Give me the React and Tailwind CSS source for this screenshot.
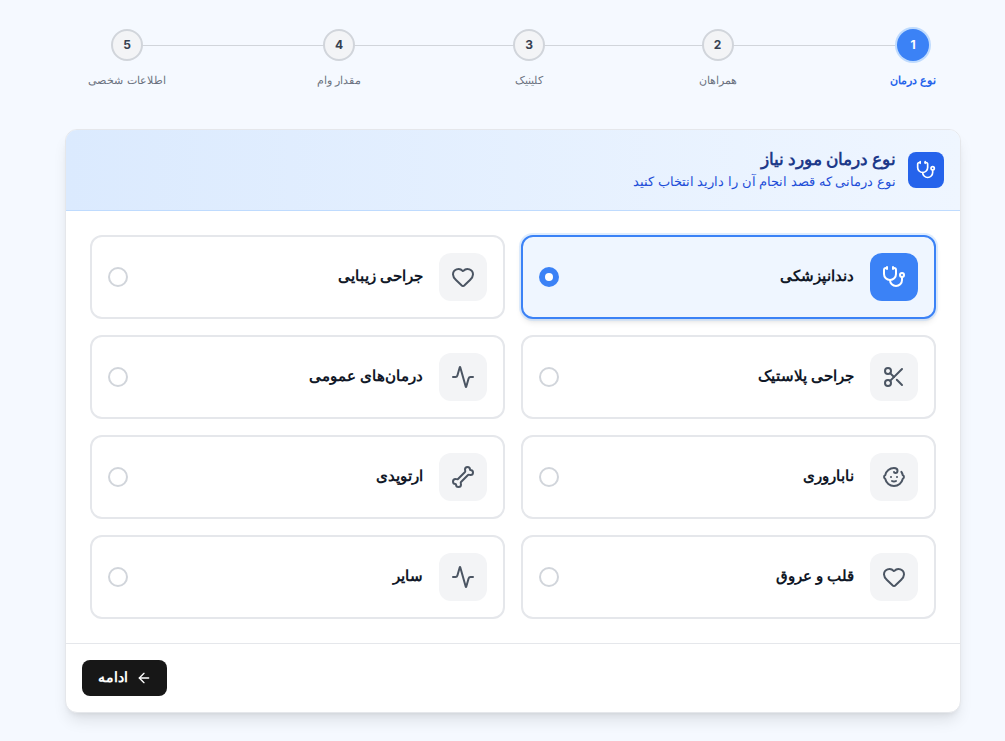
import React from "react";
import { Stethoscope, Heart, Scissors, Activity, Baby, Bone, ArrowLeft } from "lucide-react";

const steps = [
  ["1", "نوع درمان", "w-[47px]", true],
  ["2", "همراهان", "w-[41px]"],
  ["3", "کلینیک", "w-[33px]"],
  ["4", "مقدار وام", "w-[44px]"],
  ["5", "اطلاعات شخصی", "w-[77px]"],
];

const options = [
  ["دندانپزشکی", Stethoscope, true],
  ["جراحی زیبایی", Heart],
  ["جراحی پلاستیک", Scissors],
  ["درمان‌های عمومی", Activity],
  ["ناباروری", Baby],
  ["ارتوپدی", Bone],
  ["قلب و عروق", Heart],
  ["سایر", Activity],
];

function Step({ n, label, width, active }) {
  return (
    <div className={`relative flex flex-col items-center gap-[11px] ${width}`}>
      <div
        className={
          active
            ? "w-8 h-8 rounded-full bg-[#3b82f6] text-white ring-2 ring-[#bfdbfe] flex items-center justify-center text-xs font-bold"
            : "w-8 h-8 rounded-full bg-[#f3f4f6] border-2 border-[#d1d5db] text-[#374151] flex items-center justify-center text-xs font-bold"
        }
      >
        {n}
      </div>
      <span className={active ? "text-[11px] leading-4 font-bold text-[#2563eb] whitespace-nowrap" : "text-[11px] leading-4 text-[#6b7280] whitespace-nowrap"}>
        {label}
      </span>
    </div>
  );
}

function Option({ label, Icon, active }) {
  return (
    <div
      className={
        active
          ? "h-[84px] rounded-xl border-2 border-[#3b82f6] bg-[#eff6ff] shadow-md ring-2 ring-[#bfdbfe]/50 p-4 flex items-center gap-4"
          : "h-[84px] rounded-xl border-2 border-[#e5e7eb] bg-white p-4 flex items-center gap-4"
      }
    >
      <div
        className={
          active
            ? "w-12 h-12 rounded-xl bg-[#3b82f6] text-white flex items-center justify-center shrink-0"
            : "w-12 h-12 rounded-xl bg-[#f3f4f6] text-[#4b5563] flex items-center justify-center shrink-0"
        }
      >
        <Icon size={24} strokeWidth={2} />
      </div>
      <span className="flex-1 pb-0.5 text-[15px] font-semibold text-[#111827]">{label}</span>
      {active ? (
        <div className="w-5 h-5 rounded-full bg-[#3b82f6] flex items-center justify-center shrink-0">
          <div className="w-2 h-2 rounded-full bg-white" />
        </div>
      ) : (
        <div className="w-5 h-5 rounded-full border-2 border-[#d1d5db] shrink-0" />
      )}
    </div>
  );
}

export default function App() {
  return (
    <div dir="rtl" className="min-h-[741px] bg-[#f5f9ff] pt-[29px] pr-[44px] font-['Inter','Noto_Sans',sans-serif]">
      <div className="w-[896px]">
        <div className="relative flex items-start justify-between pr-[24.5px] pl-[23.5px] mb-[41px]">
          <div className="absolute top-4 right-[48px] left-[62px] h-px bg-[#d1d5db]" />
          {steps.map(([n, label, width, active]) => (
            <Step key={n} n={n} label={label} width={width} active={active} />
          ))}
        </div>
        <div className="rounded-xl border border-[#e5e7eb] bg-white shadow-lg overflow-hidden">
          <div className="h-[81px] px-4 flex items-center gap-3 border-b border-[#bfdbfe] bg-gradient-to-l from-[#eff6ff] to-[#dbeafe]">
            <div className="w-9 h-9 rounded-lg bg-[#2563eb] text-white flex items-center justify-center shrink-0">
              <Stethoscope size={20} />
            </div>
            <div>
              <h2 className="text-[17px] font-bold leading-[22px] text-[#1e3a8a]">نوع درمان مورد نیاز</h2>
              <p className="text-[13px] leading-[22px] text-[#1d4ed8]">نوع درمانی که قصد انجام آن را دارید انتخاب کنید</p>
            </div>
          </div>
          <div className="p-6 grid grid-cols-2 gap-4">
            {options.map(([label, Icon, active]) => (
              <Option key={label} label={label} Icon={Icon} active={active} />
            ))}
          </div>
          <div className="border-t border-[#e5e7eb] p-4 flex justify-end">
            <button className="h-9 w-[85px] rounded-lg bg-[#171717] text-white text-sm font-bold flex items-center justify-center gap-2">
              <ArrowLeft size={16} />
              <span className="pb-0.5">ادامه</span>
            </button>
          </div>
        </div>
      </div>
    </div>
  );
}
